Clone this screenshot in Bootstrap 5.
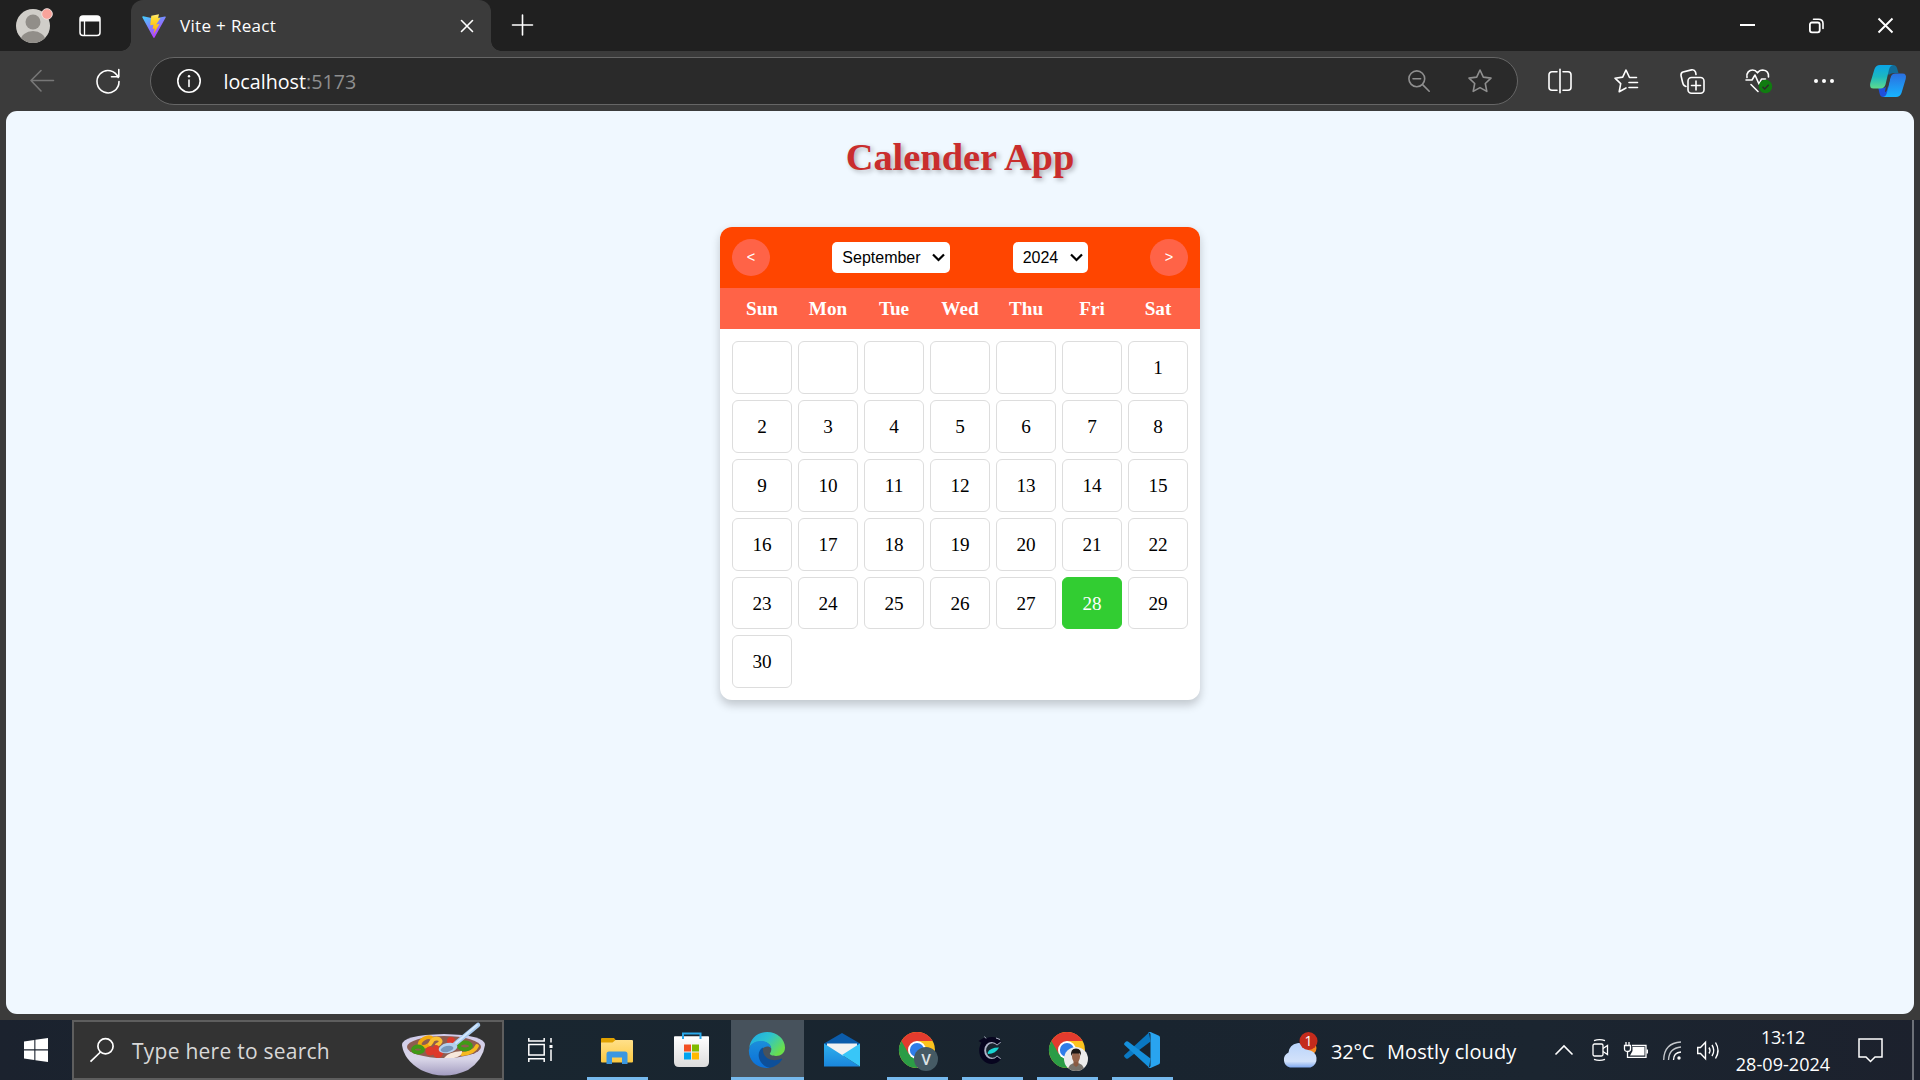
<!DOCTYPE html>
<html lang="en">
<head>
<meta charset="utf-8">
<title>Vite + React</title>
<meta name="viewport" content="width=device-width, initial-scale=1">
<link href="https://cdn.jsdelivr.net/npm/bootstrap@5.3.0/dist/css/bootstrap.min.css" rel="stylesheet">
<style>
  body { width: 1920px; height: 1080px; overflow: hidden; background: #3b3b3b; font-family: "Open Sans", "Noto Sans", sans-serif; }
  svg { display: block; flex: none; overflow: visible; }
  .slot { display: flex; align-items: center; justify-content: center; flex: none; }
  .ln { fill: none; stroke: #fff; stroke-width: 1.6; stroke-linecap: round; stroke-linejoin: round; }
  .dim { stroke: #8f8f8f; }
  .off { stroke: #777; }

  /* browser chrome */
  .tab-strip { height: 51px; background: #202020; }
  .w-avatar { width: 66px; } .w-space { width: 48px; }
  .tab-active { width: 360px; height: 51px; margin-left: 17px; background: #3b3b3b; border-radius: 12px 12px 0 0; color: #fff; font-size: 17px; letter-spacing: .33px; padding: 0 18px 0 11px; position: relative; }
  .tab-active::before, .tab-active::after { content: ""; position: absolute; bottom: 0; width: 10px; height: 10px; }
  .tab-active::before { left: -10px; background: radial-gradient(circle at 0 0, transparent 9.5px, #3b3b3b 10px); }
  .tab-active::after { right: -10px; background: radial-gradient(circle at 100% 0, transparent 9.5px, #3b3b3b 10px); }
  .tab-title { margin-left: 14px; line-height: 50px; }
  .w-plus { width: 63px; } .w-win { width: 69px; height: 51px; }
  .toolbar { height: 60px; }
  .w-back { width: 84px; } .w-tool { width: 66px; } .w-copilot { width: 61px; }
  .address { width: 1368px; height: 48px; margin-left: 18px; margin-right: 9px; background: #2a2a2a; border: 1.5px solid #666; border-radius: 24px; font-size: 19.7px; color: #fff; padding-left: 26px; }
  .address .url { margin-left: 22.5px; line-height: 46px; padding-top: 1px; }
  .address .port { color: #8f8f8f; }
  .w-addr { width: 60px; }

  /* page */
  .viewport-page { width: 1908px; height: 903px; margin: 0 6px 6px; background: #f0f8ff; border-radius: 11px; font-family: "Liberation Serif", serif; color: #000; }
  .app-title { font-size: 38.4px; line-height: 44px; font-weight: 700; color: #c92d2d; margin: 24px 0 48px; text-shadow: 2.4px 2.4px 4.8px rgba(0,0,0,.3); }
  .calendar { width: 480px; height: 473px; background: #fff; border-radius: 12px; box-shadow: 0 4.8px 9.6px rgba(0,0,0,.2); overflow: hidden; }
  .cal-head { height: 61px; background: #ff4500; padding: 0 12px; }
  .nav-round { width: 38px; height: 37px; border: 0; border-radius: 50%; background: #ff6347; color: #fff; font: 14.5px/37px "Liberation Sans", sans-serif; padding: 0; text-align: center; }
  .cal-head .form-select { height: 31px; border: 0; border-radius: 5px; color: #000; font: 16px/31px "Liberation Sans", sans-serif; padding: 0 0 0 10px; background-color: #fff; background-size: 13px 9px; background-position: right 5px center; background-image: url("data:image/svg+xml,%3csvg xmlns='http://www.w3.org/2000/svg' viewBox='0 0 13 9'%3e%3cpath fill='none' stroke='%23000' stroke-width='2.2' d='M1 1.5l5.5 5.5 5.5-5.5'/%3e%3c/svg%3e"); }
  .sel-month { width: 118px; } .sel-year { width: 75px; }
  .week-grid { display: grid; grid-template-columns: repeat(7, 60px); gap: 6px; padding: 0 12px; font-size: 19.2px; text-align: center; }
  .week-names { height: 41px; line-height: 42px; background: #ff6347; color: #fff; font-weight: 700; }
  .week-days { padding-top: 12.35px; line-height: 52.4px; grid-auto-rows: 52.8px; }
  .week-days div { border: 1px solid #ddd; border-radius: 6px; }
  .week-days .today { background: #32cd32; border-color: #32cd32; color: #fff; }

  /* taskbar */
  .taskbar { height: 60px; background: linear-gradient(90deg, #1b222e, #192630 25%, #19242f 60%, #1b2530 80%, #1c212d); color: #fff; }
  .w-start { width: 72px; }
  .search-box { width: 432px; height: 60px; border: 2px solid #5e5e5e; background: #333; color: #d8d8d8; font-size: 21px; letter-spacing: .25px; padding-left: 16px; }
  .search-box .hint { margin-left: 18px; width: 270px; padding-top: 4px; }
  .w-view { width: 71px; }
  .apps { margin-left: 4px; }
  .app { width: 75px; height: 60px; position: relative; }
  .app.open::after { content: ""; position: absolute; left: 8px; bottom: 0; width: 61px; height: 3px; background: #76b9ed; }
  .app.active { background: linear-gradient(#47525c, #47525c) 2px 0 / 73px 60px no-repeat; }
  .app.active::after { left: 2px; width: 73px; }
  .weather { width: 264px; font-size: 20px; }
  .weather .deg { margin-left: 13px; width: 56px; padding-top: 3px; letter-spacing: -.2px; }
  .weather .sky { padding-top: 3px; letter-spacing: .1px; white-space: nowrap; }
  .w-tray { width: 36px; }
  .clock { width: 114px; font-size: 18px; line-height: 27px; padding-top: 2px; letter-spacing: .05px; }
  .clock .hour { line-height: 28px; letter-spacing: -.4px; margin-top: -2px; }
  .w-note { width: 60px; }
  .peek { width: 8px; height: 60px; margin-left: 12px; border-left: 2px solid #6c7078; }
</style>
<script src="https://cdn.jsdelivr.net/npm/bootstrap@5.3.0/dist/js/bootstrap.bundle.min.js"></script>
</head>
<body class="d-flex flex-column m-0">

<svg width="0" height="0" class="position-absolute">
  <defs>
    <linearGradient id="vA" x1="0" y1="0" x2=".6" y2="1"><stop offset="0" stop-color="#41d1ff"/><stop offset="1" stop-color="#bd34fe"/></linearGradient>
    <linearGradient id="vB" x1="0" y1="0" x2="0" y2="1"><stop offset="0" stop-color="#ffea83"/><stop offset=".2" stop-color="#ffdd35"/><stop offset="1" stop-color="#ffa800"/></linearGradient>
    <linearGradient id="cpA" x1="0" y1="0" x2="0" y2="1"><stop offset="0" stop-color="#0aa5e8"/><stop offset=".5" stop-color="#1cb8c0"/><stop offset="1" stop-color="#5fdc8c"/></linearGradient>
    <linearGradient id="cpB" x1="0" y1="0" x2="0" y2="1"><stop offset="0" stop-color="#2b6fe0"/><stop offset="1" stop-color="#17b4ff"/></linearGradient>
    <linearGradient id="bowl" x1="0" y1="0" x2="0" y2="1"><stop offset="0" stop-color="#cfcaea"/><stop offset=".6" stop-color="#d9d6e8"/><stop offset="1" stop-color="#a39cc0"/></linearGradient>
    <linearGradient id="fold" x1="0" y1="0" x2="0" y2="1"><stop offset="0" stop-color="#ffe08a"/><stop offset="1" stop-color="#fcc940"/></linearGradient>
    <linearGradient id="bag" x1="0" y1="0" x2="0" y2="1"><stop offset="0" stop-color="#fff"/><stop offset="1" stop-color="#dcdcdc"/></linearGradient>
    <linearGradient id="edA" x1="0" y1="0" x2="1" y2=".6"><stop offset="0" stop-color="#1ca7e8"/><stop offset=".5" stop-color="#2dc3cf"/><stop offset="1" stop-color="#6be04a"/></linearGradient>
    <linearGradient id="edB" x1="0" y1="0" x2="0" y2="1"><stop offset="0" stop-color="#1b8edb"/><stop offset="1" stop-color="#0b6fd8"/></linearGradient>
    <linearGradient id="mlA" x1="0" y1="0" x2="0" y2="1"><stop offset="0" stop-color="#2fb1ee"/><stop offset="1" stop-color="#1a86dc"/></linearGradient>
    <linearGradient id="cloud" x1="0" y1="0" x2="0" y2="1"><stop offset="0" stop-color="#b9d4fb"/><stop offset=".75" stop-color="#d3e2fa"/><stop offset="1" stop-color="#7fa8ee"/></linearGradient>
    <clipPath id="face"><circle cx="12" cy="12" r="12"/></clipPath>
    <g id="chrome">
      <circle cx="18" cy="18" r="18" fill="#fcc31e"/>
      <path d="M18 18L2.4 9A18 18 0 0 0 18 36L25.800 22.500Z" fill="#2b9c46"/>
      <path d="M2.4 9A18 18 0 0 1 33.600 9H18L10.200 22.500Z" fill="#e33b2e"/>
      <circle cx="18" cy="18" r="9" fill="#fff"/><circle cx="18" cy="18" r="7.100" fill="#2f7de9"/>
    </g>
  </defs>
</svg>

<header class="tab-strip d-flex align-items-center flex-shrink-0">
  <div class="slot w-avatar">
    <svg width="36" height="36" viewBox="0 0 36 36"><clipPath id="av"><circle cx="18" cy="18" r="17"/></clipPath><circle cx="18" cy="18" r="17" fill="#d0cec9"/><g clip-path="url(#av)" fill="#918e89"><circle cx="18" cy="14" r="7.500"/><ellipse cx="18" cy="33" rx="12.500" ry="10"/></g><circle cx="32" cy="6" r="5.300" fill="#f8a39b" stroke="#f0e0de"/></svg>
  </div>
  <div class="slot w-space">
    <svg width="22" height="22" viewBox="0 0 22 22"><rect x="1" y="1" width="20" height="19.500" rx="3" fill="none" stroke="#fff" stroke-width="1.500"/><path d="M1 6.500V4a3 3 0 0 1 3-3h14a3 3 0 0 1 3 3v2.500z" fill="#fff"/><path d="M5.500 6v14.500" stroke="#fff" stroke-width="1.300"/></svg>
  </div>
  <div class="tab-active d-flex align-items-center">
    <svg width="24" height="24" viewBox="0 0 24 24"><path d="M.3 3.300L11.300 23.600q.7.800 1.300 0L23.800 3.300q.2-.9-.8-.8L12 4.500 1.200 2.300Q0 2.300.3 3.300z" fill="url(#vA)"/><path d="M17 .2L9.300 1.700 8.200 11.200l3.300-.5-.9 4.200 2.200-.5-1.500 6.100 6.200-10.600-3.300.6L18.500 4l-2.400.3z" fill="url(#vB)"/></svg>
    <span class="tab-title">Vite + React</span>
    <svg class="ms-auto" width="12" height="12" viewBox="0 0 12 12"><path class="ln" d="M.5.500l11 11M11.500.500l-11 11"/></svg>
  </div>
  <div class="slot w-plus"><svg width="21" height="21" viewBox="0 0 21 21"><path class="ln" d="M10.500.500v20M.5 10.500h20" transform="translate(0 -.5)"/></svg></div>
  <div class="slot w-win ms-auto"><svg width="15" height="15" viewBox="0 0 15 15"><path d="M0 7h15" stroke="#fff" stroke-width="2"/></svg></div>
  <div class="slot w-win"><svg width="15" height="15" viewBox="0 0 15 15"><rect x=".9" y="4.500" width="9.800" height="9.800" rx="2" fill="none" stroke="#fff" stroke-width="1.800"/><path d="M4.500 1.200H9.500Q14 1.200 14 5.500V10.500" class="ln"/></svg></div>
  <div class="slot w-win"><svg width="15" height="15" viewBox="0 0 15 15"><path d="M.5.500l14 14M14.500.500L.5 14.500" stroke="#fff" stroke-width="1.900"/></svg></div>
</header>

<nav class="toolbar d-flex align-items-center flex-shrink-0">
  <div class="slot w-back"><svg width="24" height="22" viewBox="0 0 24 22"><path class="ln off" d="M23.500 10.500H1M11 .5L1 10.500l10 10.500"/></svg></div>
  <div class="slot w-space"><svg width="24" height="24" viewBox="0 0 24 24"><path class="ln" d="M22.200 8.500A11 11.200 0 1 0 23 12.500M22.800.5V7.800H15.500"/></svg></div>
  <div class="address d-flex align-items-center">
    <svg width="24" height="24" viewBox="0 0 24 24"><circle class="ln" cx="12" cy="12" r="11.200"/><path class="ln" d="M12 11v6.500"/><circle cx="12" cy="7.300" r="1.200" fill="#fff"/></svg>
    <span class="url">localhost<span class="port">:5173</span></span>
    <div class="slot w-addr ms-auto"><svg width="22" height="22" viewBox="0 0 22 22"><g class="ln dim"><circle cx="8.800" cy="8.800" r="7.900"/><path d="M14.600 14.600l6.600 6.600M5 8.800h7.600"/></g></svg></div>
    <div class="slot w-addr me-2"><svg width="24" height="24" viewBox="0 0 24 24" transform="translate(1 0)"><path class="ln dim" d="M12 1l3.300 7.100 7.700 1-5.700 5.400 1.500 7.900L12 18.600l-6.800 3.800 1.500-7.900L1 9.100l7.700-1z"/></svg></div>
  </div>
  <div class="slot w-tool"><svg width="24" height="24" viewBox="0 0 24 24"><path class="ln" d="M9 2.800H4a3 3 0 0 0-3 3v12.400a3 3 0 0 0 3 3h5M15 2.800h5a3 3 0 0 1 3 3v12.400a3 3 0 0 1-3 3h-5M12 .3v23.400"/></svg></div>
  <div class="slot w-tool"><svg width="24" height="24" viewBox="0 0 24 24"><path class="ln" d="M22.500 8.500h-7L12 1 8.700 8.100 1 9.200l5.700 5.500-1.500 8L12 19M15 13.500h8.500M15 18.500h8.500"/></svg></div>
  <div class="slot w-tool"><svg width="25" height="25" viewBox="0 0 25 25"><path class="ln" d="M6 17.500L4.500 16.800Q3 15.500 2.500 13L1 6.500Q.7 3.700 3 3L11.500.900Q14.500.400 15.500 3L16 5.500"/><rect class="ln" x="8" y="8.500" width="16" height="15.700" rx="3.500"/><path class="ln" d="M16 12v9M11.500 16.500h9"/></svg></div>
  <div class="slot w-tool"><svg width="27" height="26" viewBox="0 0 27 26"><path class="ln" d="M2 9.500C1 4.500 4.500 2 7.500 2q3 0 5 2.800Q14.500 2 17.800 2 24 2.500 23.500 9M1 12h6l3-5 4 9 2.500-5h4M6 16.500l7 7"/><circle cx="20.500" cy="18.500" r="6.700" fill="#107c10"/><path d="M17.500 18.800l2.200 2.200 4-4.300" fill="none" stroke="#2b2b2b" stroke-width="1.400"/></svg></div>
  <div class="slot w-tool"><svg width="20" height="4" viewBox="0 0 20 4" fill="#fff"><circle cx="2" cy="2" r="2"/><circle cx="10" cy="2" r="2"/><circle cx="18" cy="2" r="2"/></svg></div>
  <div class="slot w-copilot"><svg width="36" height="32" viewBox="0 0 36 32">
    <path d="M18 0h5q3 0 4 3l1.500 5H24q-3 0-4 3L17 8z" fill="#126c98"/>
    <path d="M18 32h-5q-2.500 0-3.300-3L8.300 23H13q3 0 4-3l2 5z" fill="#1f4fdc"/>
    <path d="M10 0h13q-3 .5-4 4.500L15.500 19.500q-1.200 4-5 4H3.500Q-1 23.500.3 18L4.500 4Q6 0 10 0z" fill="url(#cpA)"/>
    <path d="M26 32H13q3-.5 4-4.500L20.500 12.500q1.200-4 5-4H32.500q4.500 0 3.200 5.500L31.500 28Q30 32 26 32z" fill="url(#cpB)"/>
    <path d="M19.300 9.500Q20.500 8.500 22.500 8.500 21 9.500 20.300 12.500L17 25q-.8 2-2 2 .2-2 .9-5z" fill="#3b3b3b"/>
  </svg></div>
</nav>

<main class="viewport-page d-flex flex-column align-items-center flex-shrink-0">
  <h1 class="app-title">Calender App</h1>
  <section class="calendar">
    <div class="cal-head d-flex align-items-center justify-content-between">
      <button class="nav-round" type="button">&lt;</button>
      <select class="form-select sel-month"><option>September</option></select>
      <select class="form-select sel-year"><option>2024</option></select>
      <button class="nav-round" type="button">&gt;</button>
    </div>
    <div class="week-grid week-names"><div>Sun</div><div>Mon</div><div>Tue</div><div>Wed</div><div>Thu</div><div>Fri</div><div>Sat</div></div>
    <div class="week-grid week-days">
      <div></div><div></div><div></div><div></div><div></div><div></div><div>1</div>
      <div>2</div><div>3</div><div>4</div><div>5</div><div>6</div><div>7</div><div>8</div>
      <div>9</div><div>10</div><div>11</div><div>12</div><div>13</div><div>14</div><div>15</div>
      <div>16</div><div>17</div><div>18</div><div>19</div><div>20</div><div>21</div><div>22</div>
      <div>23</div><div>24</div><div>25</div><div>26</div><div>27</div><div class="today">28</div><div>29</div>
      <div>30</div>
    </div>
  </section>
</main>

<footer class="taskbar d-flex align-items-center flex-shrink-0">
  <div class="slot w-start"><svg width="24" height="24" viewBox="0 0 24 24"><path d="M0 3.400L10.300 2v9.300H0zM11.400 1.800L24 0v11.300H11.400zM0 12.500h10.300v9.400L0 20.500zM11.400 12.500H24V24l-12.600-1.800z" fill="#fff"/></svg></div>
  <div class="search-box d-flex align-items-center flex-shrink-0">
    <svg width="24" height="24" viewBox="0 0 24 24"><circle cx="15.500" cy="8.300" r="7.600" fill="none" stroke="#fff" stroke-width="1.700"/><path d="M10.500 14L.5 23.700" stroke="#fff" stroke-width="1.700"/></svg>
    <span class="hint">Type here to search</span>
    <svg width="84" height="52" viewBox="0 0 84 52">
      <path d="M0 21Q0 11 42 10 83 11 83 21 81 36 66 46 42 57 19 46 2 36 0 21z" fill="url(#bowl)"/>
      <ellipse cx="42" cy="23" rx="37" ry="11" fill="#8e5d50"/>
      <g fill="none" stroke-width="3.800" stroke-linecap="round">
        <ellipse cx="24" cy="18" rx="7" ry="4" stroke="#f3a90d" transform="rotate(-30 24 18)"/>
        <path d="M28 20Q31 13 37 15q4 3-2 6" stroke="#fbc132"/><path d="M60 30q12-1 15-8" stroke="#f6b91e"/>
        <ellipse cx="16" cy="25.500" rx="5" ry="3" stroke="#3f9a17"/><ellipse cx="63" cy="22" rx="6" ry="3.500" stroke="#3f9a17"/>
      </g>
      <g fill="#dd3a2b"><circle cx="28" cy="27" r="4.500"/><circle cx="36" cy="29" r="5"/><circle cx="34" cy="24" r="3"/><circle cx="49" cy="17" r="4"/></g>
      <path d="M42 34q4-6 18-7 1 5-8 7z" fill="#f7e8dc"/>
      <path d="M76 1L53 20" stroke="#a9cbf0" stroke-width="4.500" stroke-linecap="round"/>
      <path d="M75 1L54 19" stroke="#d3e6fb" stroke-width="1.800" stroke-linecap="round"/>
      <ellipse cx="46" cy="24" rx="9.500" ry="5" fill="#b4d0ee" transform="rotate(-12 46 24)"/><ellipse cx="45" cy="25" rx="6.500" ry="3" fill="#7897bb" transform="rotate(-12 45 25)"/>
    </svg>
  </div>
  <div class="slot w-view"><svg width="24" height="24" viewBox="0 0 24 24"><g fill="none" stroke="#fff" stroke-width="1.500"><path d="M.8 0v3h15.400V0M.8 24v-3.300h15.400V24M.8 6.500h15.400v10.400H.8z"/><path d="M23 0v4.500M23 11.500V23"/></g><rect x="21.500" y="7" width="3" height="3" fill="#fff"/></svg></div>

  <div class="apps d-flex flex-shrink-0">
    <div class="slot app open"><svg width="32" height="27" viewBox="0 0 32 27"><path d="M0 2Q0 1 1 1h12l2 2.500-2 3H0z" fill="#e0a100"/><path d="M0 5.500h11.500L14.500 3H31q1 0 1 1v20.500q0 1-1 1H1q-1 0-1-1z" fill="url(#fold)"/><path d="M5.500 27V17q0-2.500 2.500-2.500h16q2.500 0 2.500 2.500v10H21v-6.500H11V27z" fill="#3b97e0"/></svg></div>
    <div class="slot app"><svg width="36" height="36" viewBox="0 0 36 36"><path d="M0 5q0-.8.800-.8h33.400q.8 0 .8.800v25q0 5-5 5H5q-5 0-5-5z" fill="url(#bag)"/><path d="M9 7V1.500h17.500V7" fill="none" stroke="#29a8ea" stroke-width="2"/><path d="M10 12.500h7v7h-7z" fill="#f25022"/><path d="M18 12.500h7v7h-7z" fill="#7fba00"/><path d="M10 20.500h7v7h-7z" fill="#00a4ef"/><path d="M18 20.500h7v7h-7z" fill="#ffb900"/></svg></div>
    <div class="slot app open active"><svg width="36" height="36" viewBox="0 0 36 36"><path d="M.3 16C1 6.500 8.500 0 18 0 28.500 0 36 7.500 36 15.500 36 21 32 24 27 24c-4 0-6.500-1.300-6.200-2.300.2-.9 1.500-1.700 1.500-4.500 0-4.200-4.300-7.700-10.300-7.700C5.500 9.500 1.500 12.500.3 16z" fill="url(#edA)"/><path d="M.1 17.500C.8 12 6 9 11.500 9c6 0 10.500 3.200 10.800 7.500C20 13.500 15 14 12.500 18 10 22.500 11.500 31 21 35.700 9 37.500-.7 29-.1 18z" fill="url(#edB)"/><path d="M14 15.500C9 18 8.500 24.500 11.500 29.500c3 4.500 7 6.300 9.500 6.200 5-.8 9.500-4 12-8.200.3-.7-.2-1.100-.8-.8C25 30 16 27.500 14.300 20.500c-.5-2-.4-3.500-.3-5z" fill="#0d4f99"/></svg></div>
    <div class="slot app"><svg width="36" height="34" viewBox="0 0 36 34"><path d="M0 10.500L18 0l18 10.500v4H0z" fill="#0b5cab"/><path d="M3 10.500h30V18L18 24 3 18z" fill="#f2f2f2"/><path d="M0 10.500L36 33.500H0z" fill="url(#mlA)"/><path d="M36 10.500v23L18 22z" fill="#38c6f8"/></svg></div>
    <div class="slot app open"><svg width="36" height="36" viewBox="0 0 36 36"><use href="#chrome"/><circle cx="27" cy="27" r="12" fill="#455a64"/><text x="27" y="32.500" text-anchor="middle" font-family="Roboto" font-size="15" font-weight="500" fill="#dde3e6">V</text></svg></div>
    <div class="slot app open"><svg width="24" height="28" viewBox="0 0 24 28" transform="translate(-1.500 0)"><path d="M20.500 8A8.800 9.800 0 1 0 20.500 21" fill="none" stroke="#aeb2c6" stroke-width="5"/><path d="M20.500 7A10 11 0 1 0 20.500 22" fill="none" stroke="#07051f" stroke-width="5"/><path d="M0 5l5-3 6 .5-5 6z" fill="#07051f"/><path d="M6 .5l1.500 2M17.500 2l4 1.500" stroke="#aeb2c6"/><path d="M9 17Q11 11.500 20.500 11.500 17.500 17.500 9.500 18z" fill="#19d6d3"/></svg></div>
    <div class="slot app open"><svg width="36" height="36" viewBox="0 0 36 36"><use href="#chrome"/><g transform="translate(15 15)" clip-path="url(#face)"><rect width="24" height="24" fill="#ececec"/><path d="M4 24q0-8 8-8t8 8z" fill="#77726b"/><path d="M9.500 12h5v6l-2.500 2-2.500-2z" fill="#8a5b43"/><ellipse cx="12" cy="9.500" rx="4" ry="5.500" fill="#96644b"/><path d="M7.300 9Q6 1.500 12 1.500T16.700 9L16 6.500H8.500z" fill="#1d1817"/></g></svg></div>
    <div class="slot app open"><svg width="36" height="36" viewBox="0 0 36 36"><path d="M26.500 9.500L4 26.500q-1 .7-2 0L.5 25q-1-1 0-2L25 .500z" fill="#0a78c2"/><path d="M26.500 26.500L4 9.500q-1-.7-2 0L.5 11q-1 1 0 2L25 35.500z" fill="#1590dc"/><path d="M26.500 0L35 3.700q1 .6 1 1.800v25q0 1.200-1 1.800L26.500 36q-1.500.3-2.500-1 2.500 1 2.500-1.500v-31Q26.500 0 24 1q1-1.300 2.500-1z" fill="#29a4f0"/></svg></div>
  </div>

  <div class="weather d-flex align-items-center ms-auto flex-shrink-0">
    <svg width="36" height="36" viewBox="0 0 36 36"><circle cx="27" cy="16" r="7.500" fill="#f5891f"/><path d="M8 35.500A8 8 0 0 1 6.500 20.500 10 10 0 0 1 26 18a9 9 0 0 1 2.500 17.500z" fill="url(#cloud)"/><circle cx="26.500" cy="9" r="9" fill="#c42b1c"/><text x="26.500" y="14.300" text-anchor="middle" font-family="Open Sans" font-size="14" fill="#fff">1</text></svg>
    <span class="deg">32°C</span><span class="sky">Mostly cloudy</span>
  </div>
  <div class="slot w-tray"><svg width="18" height="11" viewBox="0 0 18 11"><path d="M.5 9.500L9 1l8.500 8.500" fill="none" stroke="#fff" stroke-width="1.600"/></svg></div>
  <div class="slot w-tray"><svg width="17" height="22" viewBox="0 0 17 22"><g fill="none" stroke="#fff" stroke-width="1.300"><rect x="1" y="5" width="10" height="12" rx="1.500"/><path d="M11 9.500l4.500-3v9L11 12.500M2 1.700Q7.500-.3 13 1.700M2 20.300q5.500 2 11 0"/></g></svg></div>
  <div class="slot w-tray"><svg width="24" height="17" viewBox="0 0 24 17"><path d="M8 3.500h14v11.800H3.500V9.500" fill="none" stroke="#fff" stroke-width="1.300"/><path d="M22.500 7.500H24v4h-1.500z" fill="#fff"/><path d="M8.500 5H20.500v8.500H6L8.500 9z" fill="#fff"/><path d="M.5 3.500h6V7q0 2.500-3 2.500T.5 7zM2 3.500V0M5 3.500V0" fill="#1b2530" stroke="#fff" stroke-width="1.300"/></svg></div>
  <div class="slot w-tray"><svg width="18" height="19" viewBox="0 0 18 19"><g fill="none" stroke="#fff" stroke-width="1.300"><path d="M.7 19Q1 2 18 1M5.500 19Q6 7 18 6" stroke="#c5c8cc"/><path d="M10.500 19Q10.500 11.500 18 11"/></g><circle cx="16" cy="17" r="1.700" fill="#fff"/></svg></div>
  <div class="slot w-tray"><svg width="22" height="19" viewBox="0 0 22 19"><g fill="none" stroke="#fff" stroke-width="1.400"><path d="M.7 6.500H3.500L8.500 1.200v16.600L3.500 12.500H.7z"/><path d="M12 6.500q2 3 0 6M15 4q3.500 5.500 0 11M18.500 1.500q5 8 0 16"/></g></svg></div>
  <div class="clock text-center flex-shrink-0"><div class="hour">13:12</div><div>28-09-2024</div></div>
  <div class="slot w-note"><svg width="25" height="25" viewBox="0 0 25 25"><path d="M1 1h23v18h-7l-4.500 4.500L8 19H1z" fill="none" stroke="#fff" stroke-width="1.500"/></svg></div>
  <div class="peek flex-shrink-0"></div>
</footer>
</body>
</html>
